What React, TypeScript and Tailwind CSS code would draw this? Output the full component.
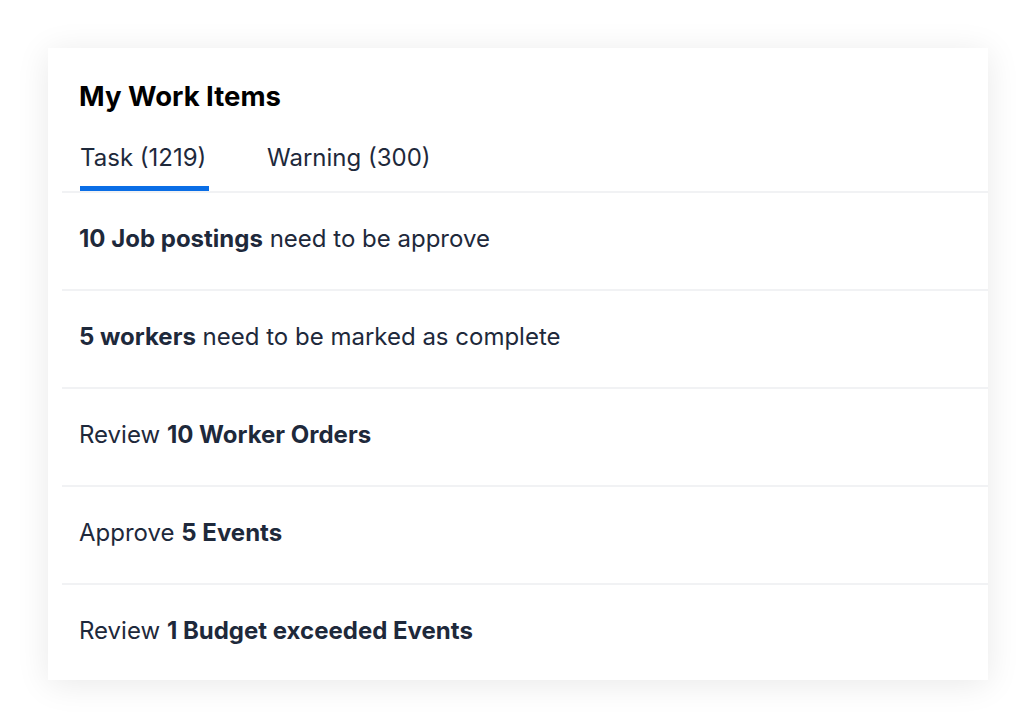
const rows: { pre?: string; bold: string; post?: string }[] = [
  { bold: "10 Job postings", post: " need to be approve" },
  { bold: "5 workers", post: " need to be marked as complete" },
  { pre: "Review ", bold: "10 Worker Orders" },
  { pre: "Approve ", bold: "5 Events" },
  { pre: "Review ", bold: "1 Budget exceeded Events" },
];

export default function App() {
  return (
    <div
      className="min-h-[728px] w-full bg-white pl-12 pt-12"
      style={{ fontFamily: "Inter, 'Noto Sans', sans-serif" }}
    >
      <div className="flex h-[632px] w-[940px] flex-col bg-white shadow-[0_4px_32px_rgba(0,0,0,0.09)]">
        <div className="pl-[31px] pt-[31px]">
          <h2 className="text-[27.5px] font-bold leading-[34px] text-black">My Work Items</h2>
          <div className="mt-[30px] flex gap-[58px] text-[24px] text-[#1e293b]">
            <div className="flex w-[130px] flex-col pl-[1px]">
              <span className="leading-[29px]">Task (1219)</span>
              <div className="mt-[14px] h-[5px] bg-[#0a6ee6]" />
            </div>
            <span className="leading-[29px]">Warning (300)</span>
          </div>
        </div>
        <div className="ml-[14px] flex flex-1 flex-col">
          {rows.map((r, i) => (
            <div
              key={i}
              className="flex h-[98px] items-center border-t-2 border-[#f1f2f4] pb-[4px] pl-[17px] text-[24px] text-[#1e293b]"
            >
              <span>
                {r.pre}
                <b className="font-bold">{r.bold}</b>
                {r.post}
              </span>
            </div>
          ))}
        </div>
      </div>
    </div>
  );
}
